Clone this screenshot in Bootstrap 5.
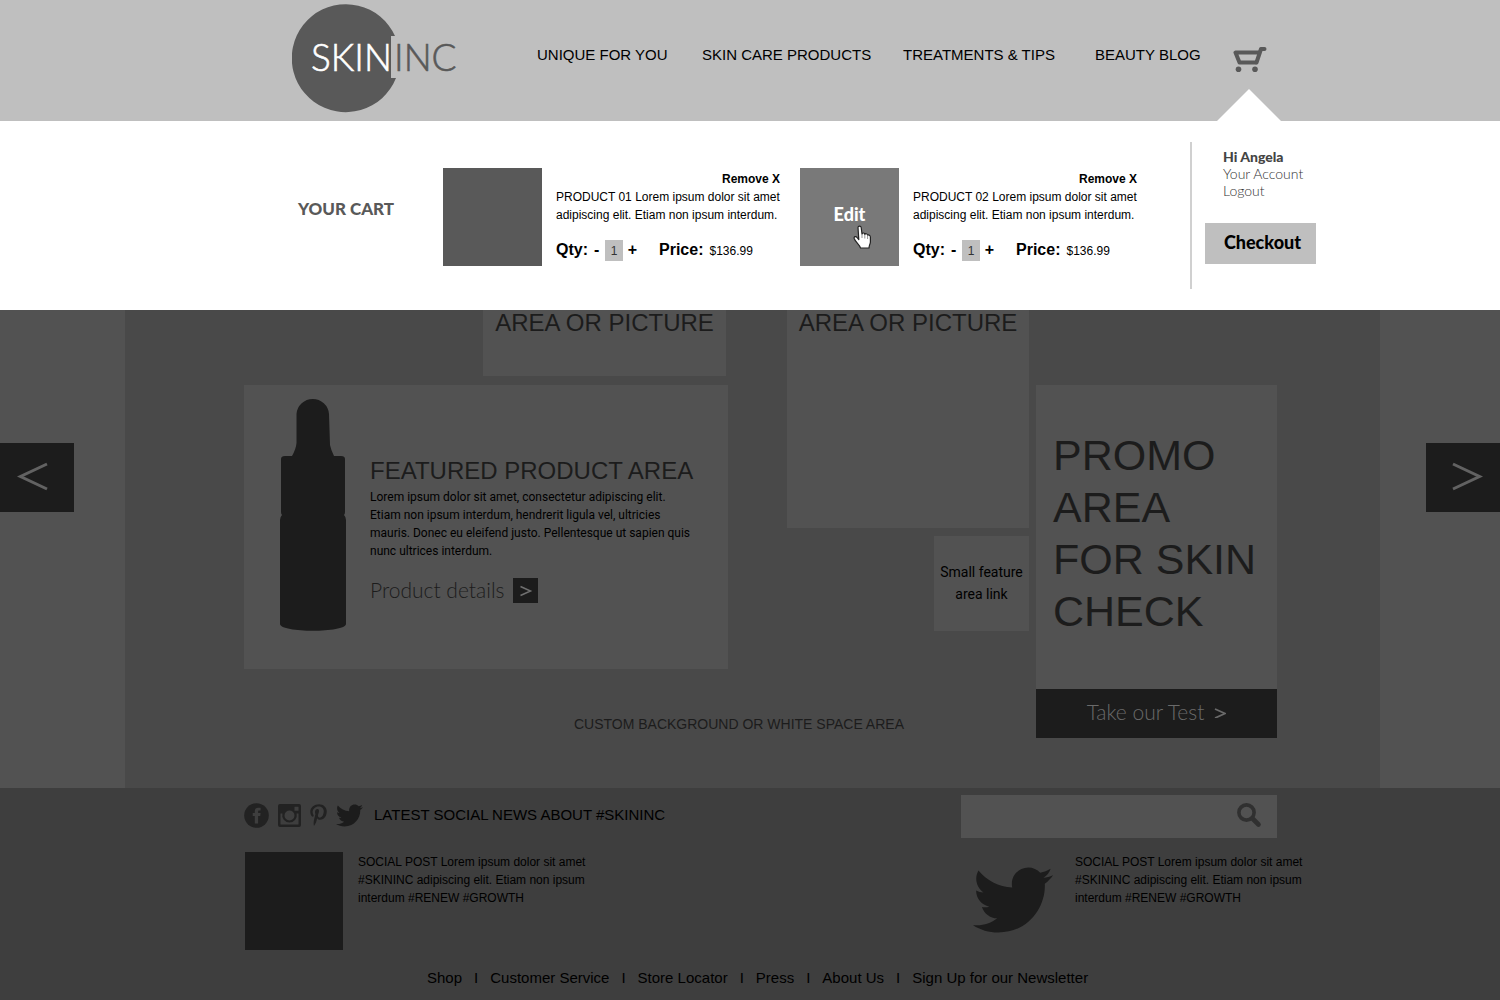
<!DOCTYPE html>
<html lang="en">
<head>
<meta charset="utf-8">
<meta name="viewport" content="width=device-width, initial-scale=1">
<title>Skin Inc – Your cart</title>
<link href="https://cdn.jsdelivr.net/npm/bootstrap@5.3.0/dist/css/bootstrap.min.css" rel="stylesheet">
<style>
  :root { --ink: #1c1c1c; --tile: #525252; --stage: #494949; --foot: #3e3e3e; --silver: #bfbfbf; --slate: #595959; }
  body { font-family: "Liberation Sans", Arial, sans-serif; font-size: 12px; line-height: 18px; color: #000; background: var(--foot); }
  a { color: inherit; text-decoration: none; }
  svg { display: block; }
  button { color: inherit; }
  .lato { font-family: Lato, sans-serif; }
  .din { font-family: Roboto, sans-serif; }

  .site-header { background: var(--silver); height: 121px; padding-left: 292px; }
  .brand { width: 245px; padding-top: 3px; }
  .main-nav { display: grid; grid-template-columns: 165px 201px 192px 138px 36px; font-size: 15px; line-height: 20px; padding-top: 45px; }
  .cart-link { height: 76px; }
  .cart-pointer { width: 64px; height: 32px; left: -16px; bottom: 0; background: #fff; clip-path: polygon(50% 0, 100% 100%, 0 100%); }

  .cart-panel { background: #fff; height: 189px; padding: 21px 0 21px 298px; }
  .cart-title { width: 145px; font-size: 17px; line-height: 20px; font-weight: 900; color: var(--slate); padding-top: 57px; }
  .cart-item { width: 357px; padding-top: 26px; gap: 14px; }
  .thumb { width: 99px; height: 98px; background: var(--slate); }
  .thumb-edit { background: #797979; color: #fff; font-size: 18px; line-height: 20px; font-weight: 900; padding-bottom: 8px; }
  .cursor { left: 53px; top: 57px; }
  .item-text { width: 224px; padding-top: 2px; }
  .qty-row { font-size: 16px; line-height: 20px; font-weight: bold; }
  .qty-label { width: 38px; }
  .qty-box { width: 18px; height: 21px; background: var(--silver); font-size: 12px; color: #333; }
  .qty-btn { font-weight: bold; width: 11px; height: 20px; line-height: 20px; }
  .price-label { margin-left: 21px; }
  .price-value { font-size: 12px; line-height: 22px; font-weight: normal; margin-left: 6px; }
  .account { border-left: 2px solid #d0d0d0; margin-left: 33px; width: 126px; padding: 6px 0 0 13px; font-size: 14px; line-height: 17px; color: #333; }
  .account-links { padding-left: 18px; font-weight: 300; }
  .account-name { font-weight: 900; color: #444; }
  .checkout { width: 111px; height: 41px; background: var(--silver); font-size: 18px; font-weight: 900; color: #000; margin-top: 24px; padding: 0 0 2px 4px; }

  .hero { background: var(--tile); }
  .strip-left { width: 125px; padding-top: 133px; }
  .strip-right { width: 120px; padding-top: 133px; }
  .slide-btn { width: 74px; height: 69px; background: var(--ink); }
  .stage { background: var(--stage); height: 478px; padding: 0 103px 0 119px; }
  .tile { background: var(--tile); }
  .tile-heading { font-size: 24px; line-height: 26px; color: var(--ink); }
  .tile-short { width: 243px; height: 66px; margin-right: 2px; }
  .tile-tall { height: 218px; }
  .featured { width: 484px; height: 284px; margin-top: 9px; padding: 12px 24px 0 36px; gap: 24px; }
  .featured-text { padding-top: 61px; }
  .featured-copy { padding-top: 4px; }
  .details-link { font-size: 21px; line-height: 24px; font-weight: 300; color: var(--ink); gap: 9px; margin-top: 18px; }
  .details-arrow { width: 25px; height: 25px; background: var(--ink); }
  .mid-col { width: 242px; margin-left: 59px; }
  .small-feature { width: 95px; height: 95px; margin-top: 8px; padding-bottom: 2px; font-size: 14px; line-height: 22px; }
  .caption-line { font-size: 14px; color: var(--ink); padding-right: 125px; margin-top: 46px; }
  .promo { width: 241px; margin-top: 75px; }
  .promo-text { height: 304px; padding: 44px 17px 0; font-size: 43px; line-height: 52px; color: var(--ink); }
  .promo-link { height: 49px; background: var(--ink); color: #6a6a6a; font-size: 21px; font-weight: 300; padding-bottom: 3px; gap: 10px; }

  .site-footer { background: var(--foot); padding: 7px 223px 0 244px; }
  .social-line { font-size: 15px; padding-bottom: 3px; }
  .social-icons { gap: 9px; margin-right: 11px; color: #222; }
  .search-box { width: 316px; height: 43px; background: var(--tile); padding: 0 15px 3px 0; }
  .search-box input { background: transparent; box-shadow: none !important; }
  .posts { margin: 14px -30px 0 1px; }
  .post-square { width: 98px; height: 98px; background: var(--ink); }
  .post-text { width: 232px; padding-top: 1px; }
  .post-left { gap: 15px; }
  .post-right { gap: 21px; }
  .footer-nav { font-size: 15px; line-height: 20px; gap: 12px; margin-top: 18px; padding: 0 0 12px 183px; }
</style>
</head>
<body>

<header class="site-header d-flex">
  <a class="brand" href="#" aria-label="Skin Inc">
    <svg width="170" height="112" viewBox="0 0 170 112">
      <path fill="#595959" d="M103 33A54 54 0 1 0 104 75H99V33Z"/>
      <g font-family="Lato, sans-serif" font-size="37" font-weight="300">
        <text x="19" y="68" fill="#fff" stroke="#fff" stroke-width=".6">SKIN</text>
        <text x="102" y="68" fill="#595959" stroke="#595959" stroke-width=".6">INC</text>
      </g>
    </svg>
  </a>
  <nav class="main-nav">
    <a href="#">UNIQUE FOR YOU</a>
    <a href="#">SKIN CARE PRODUCTS</a>
    <a href="#">TREATMENTS &amp; TIPS</a>
    <a href="#">BEAUTY BLOG</a>
    <a href="#" class="cart-link position-relative" aria-label="Cart">
      <svg width="36" height="28" viewBox="0 0 36 28" fill="none" stroke="#595959">
        <path stroke-width="4" stroke-linejoin="round" d="M23.500 17.500H6.500L2.500 7.500H26.500"/>
        <path stroke-width="4" stroke-linecap="round" stroke-linejoin="round" d="M23.500 17.500L28 4H31.500"/>
        <circle cx="5.500" cy="24.300" r="2.800" fill="#595959" stroke="none"/>
        <circle cx="22" cy="24.300" r="2.800" fill="#595959" stroke="none"/>
      </svg>
      <span class="cart-pointer position-absolute"></span>
    </a>
  </nav>
</header>

<section class="cart-panel d-flex" aria-label="Your cart">
  <h2 class="cart-title lato mb-0">YOUR CART</h2>

  <article class="cart-item d-flex">
    <div class="thumb flex-shrink-0"></div>
    <div class="item-text">
      <div class="text-end"><button class="border-0 bg-transparent p-0 fw-bold">Remove X</button></div>
      <p class="mb-3">PRODUCT 01 Lorem ipsum dolor sit amet adipiscing elit. Etiam non ipsum interdum.</p>
      <div class="qty-row d-flex">
        <label class="qty-label" for="qty1">Qty:</label>
        <button class="qty-btn border-0 bg-transparent p-0 text-start" aria-label="Less">-</button>
        <input id="qty1" class="qty-box border-0 p-0 text-center" value="1">
        <button class="qty-btn border-0 bg-transparent p-0 ms-1" aria-label="More">+</button>
        <span class="price-label">Price:</span>
        <span class="price-value">$136.99</span>
      </div>
    </div>
  </article>

  <article class="cart-item d-flex">
    <button class="thumb thumb-edit lato flex-shrink-0 border-0 position-relative d-flex align-items-center justify-content-center">Edit
      <svg class="cursor position-absolute" width="20" height="25" viewBox="0 0 20 25">
        <path fill="#fff" stroke="#222" stroke-width="1.200" stroke-linejoin="round" d="M5 2.500C5 .7 8 .7 8.200 2.500L9 9C9.500 7.500 11.600 7.800 11.800 9.300C12.500 8.300 14.300 8.600 14.600 10.200C15.700 9.500 17.300 10.200 17.400 12V17C17.400 19 16 20 16 23H7.500C7 20 2.500 17.500 1.200 13.500C.6 11.500 3 10.800 4.200 12.600L5.800 14.600Z"/>
        <path fill="none" stroke="#777" stroke-width=".8" d="M9 9V13M11.800 9.500V13.500M14.600 10.500V14"/>
      </svg>
    </button>
    <div class="item-text">
      <div class="text-end"><button class="border-0 bg-transparent p-0 fw-bold">Remove X</button></div>
      <p class="mb-3">PRODUCT 02 Lorem ipsum dolor sit amet adipiscing elit. Etiam non ipsum interdum.</p>
      <div class="qty-row d-flex">
        <label class="qty-label" for="qty2">Qty:</label>
        <button class="qty-btn border-0 bg-transparent p-0 text-start" aria-label="Less">-</button>
        <input id="qty2" class="qty-box border-0 p-0 text-center" value="1">
        <button class="qty-btn border-0 bg-transparent p-0 ms-1" aria-label="More">+</button>
        <span class="price-label">Price:</span>
        <span class="price-value">$136.99</span>
      </div>
    </div>
  </article>

  <aside class="account lato">
    <div class="account-links d-flex flex-column">
      <strong class="account-name">Hi Angela</strong>
      <a href="#">Your Account</a>
      <a href="#">Logout</a>
    </div>
    <button class="checkout border-0">Checkout</button>
  </aside>
</section>

<main class="hero d-flex">
  <div class="strip-left">
    <button class="slide-btn border-0 p-0" aria-label="Previous">
      <svg width="66" height="69" viewBox="0 0 66 69" fill="none" stroke="#626262" stroke-width="3"><path d="M47 21L20.500 33.500L47 46"/></svg>
    </button>
  </div>

  <div class="stage flex-grow-1 d-flex justify-content-between">
    <div>
      <div class="d-flex">
        <div class="d-flex flex-column">
          <div class="tile tile-short tile-heading text-center align-self-end">AREA OR PICTURE</div>
          <section class="tile featured d-flex">
            <svg class="flex-shrink-0" width="66" height="236" viewBox="0 0 66 236">
              <path fill="#1c1c1c" d="M16.500 17A16.300 16.300 0 0 1 49 17L50 48Q51 53 54 59H61Q65 59 65 62V115Q65 117 64 118Q66 120 66 123V227C66 236 0 236 0 227V123Q0 120 2 118Q1 117 1 115V62Q1 59 5 59H12Q16 52 16.500 46Z"/>
            </svg>
            <div class="featured-text">
              <h2 class="tile-heading fw-normal mb-0">FEATURED PRODUCT AREA</h2>
              <p class="featured-copy din mb-0">Lorem ipsum dolor sit amet, consectetur adipiscing elit.<br>Etiam non ipsum interdum, hendrerit ligula vel, ultricies<br>mauris. Donec eu eleifend justo. Pellentesque ut sapien quis<br>nunc ultrices interdum.</p>
              <a href="#" class="details-link lato d-flex">Product details
                <span class="details-arrow"><svg width="25" height="25" viewBox="0 0 25 25" fill="none" stroke="#707070" stroke-width="1.500"><path d="M7.500 8.500L17.500 13L7.500 17.500"/></svg></span>
              </a>
            </div>
          </section>
        </div>
        <div class="mid-col d-flex flex-column">
          <div class="tile tile-tall tile-heading text-center">AREA OR PICTURE</div>
          <a href="#" class="tile small-feature din text-center align-self-end d-flex align-items-center">Small feature area link</a>
        </div>
      </div>
      <div class="caption-line text-end">CUSTOM BACKGROUND OR WHITE SPACE AREA</div>
    </div>

    <section class="promo">
      <h2 class="tile promo-text fw-normal mb-0">PROMO<br>AREA<br>FOR SKIN<br>CHECK</h2>
      <a href="#" class="promo-link lato d-flex align-items-center justify-content-center">Take our Test
        <svg width="12" height="12" viewBox="0 0 12 12" fill="none" stroke="#6a6a6a" stroke-width="1.800"><path d="M1 3L11 7.500L1 12"/></svg>
      </a>
    </section>
  </div>

  <div class="strip-right d-flex justify-content-end align-items-start">
    <button class="slide-btn border-0 p-0" aria-label="Next">
      <svg width="74" height="69" viewBox="0 0 74 69" fill="none" stroke="#626262" stroke-width="3"><path d="M27 21L53.500 33.500L27 46"/></svg>
    </button>
  </div>
</main>

<footer class="site-footer">
  <div class="d-flex justify-content-between">
    <div class="social-line d-flex align-items-center">
      <div class="social-icons d-flex align-items-center">
        <a href="#" aria-label="Facebook"><svg width="25" height="25" viewBox="0 0 25 25"><circle cx="12.500" cy="12.500" r="12.300" fill="#222"/><path fill="#3e3e3e" d="M10.800 20.500V13H8.700V10.100H10.800V8.300C10.800 5.800 12.100 4.700 14.300 4.700L16.600 4.800V7.500H15.200C14.300 7.500 14.100 8 14.100 8.700V10.100H16.600L16.200 13H14.100V20.500Z"/></svg></a>
        <a href="#" aria-label="Instagram"><svg width="23" height="23" viewBox="0 0 23 23"><path fill="#222" fill-rule="evenodd" d="M2 0H21Q23 0 23 2V21Q23 23 21 23H2Q0 23 0 21V2Q0 0 2 0ZM16.500 2.700V6.700H20.500V2.700ZM2.500 9.500V20.500H20.500V9.500H18.600A7.300 7.300 0 1 1 4.400 9.500ZM11.500 6.500A5 5 0 1 0 11.500 16.500A5 5 0 1 0 11.500 6.500Z"/></svg></a>
        <a href="#" aria-label="Pinterest"><svg width="17" height="22" viewBox="0 0 384 512"><path fill="#222" d="M204 6.500C101.400 6.500 0 74.900 0 185.600 0 256 39.600 296 63.600 296c9.900 0 15.600-27.600 15.600-35.400 0-9.300-23.700-29.100-23.700-67.800 0-80.400 61.200-137.400 140.400-137.400 68.100 0 118.500 38.700 118.500 109.800 0 53.100-21.300 152.700-90.300 152.700-24.900 0-46.200-18-46.200-43.800 0-37.800 26.400-74.400 26.400-113.400 0-66.200-93.900-54.200-93.900 25.800 0 16.800 2.100 35.400 9.600 50.700-13.800 59.400-42 147.900-42 209.100 0 18.900 2.700 37.500 4.500 56.400 3.400 3.800 1.700 3.400 6.900 1.500 50.400-69 48.600-82.500 71.400-172.800 12.300 23.400 44.100 36 69.300 36 106.200 0 153.900-103.500 153.900-196.800C384 71.300 298.200 6.500 204 6.500z"/></svg></a>
        <a href="#" aria-label="Twitter"><svg width="27" height="23" viewBox="0 2.200 24 19.600"><path id="bird" fill="#1c1c1c" d="M23.954 4.569c-.885.389-1.830.654-2.825.775 1.014-.611 1.794-1.574 2.163-2.723-.951.555-2.005.959-3.127 1.184-.896-.959-2.173-1.559-3.591-1.559-2.717 0-4.920 2.203-4.920 4.917 0 .39.045.765.127 1.124C7.691 8.094 4.066 6.130 1.640 3.161c-.427.722-.666 1.561-.666 2.475 0 1.710.870 3.213 2.188 4.096-.807-.026-1.566-.248-2.228-.616v.061c0 2.385 1.693 4.374 3.946 4.827-.413.111-.849.171-1.296.171-.314 0-.615-.03-.916-.086.631 1.953 2.445 3.377 4.604 3.417-1.680 1.319-3.809 2.105-6.102 2.105-.39 0-.779-.023-1.170-.067 2.189 1.394 4.768 2.209 7.557 2.209 9.054 0 13.999-7.496 13.999-13.986 0-.209 0-.42-.015-.63.961-.689 1.800-1.560 2.460-2.548l-.047-.02z"/></svg></a>
      </div>
      LATEST SOCIAL NEWS ABOUT #SKININC
    </div>
    <form class="search-box d-flex align-items-center" role="search">
      <input class="form-control border-0 rounded-0" type="search" aria-label="Search">
      <button type="button" class="border-0 bg-transparent p-0" aria-label="Submit search">
        <svg width="26" height="26" viewBox="0 0 26 26" fill="none" stroke="#303030"><circle cx="10.500" cy="10.500" r="7.600" stroke-width="3.600"/><path d="M16.500 16.500L22.500 22.500" stroke-width="4.600" stroke-linecap="round"/></svg>
      </button>
    </form>
  </div>

  <div class="posts d-flex justify-content-between">
    <article class="post-left d-flex">
      <div class="post-square"></div>
      <p class="post-text mb-0">SOCIAL POST Lorem ipsum dolor sit amet #SKININC adipiscing elit. Etiam non ipsum interdum #RENEW #GROWTH</p>
    </article>
    <article class="post-right d-flex">
      <svg class="mt-2" width="82" height="80" viewBox="0 0 24 24"><use href="#bird"/></svg>
      <p class="post-text mb-0">SOCIAL POST Lorem ipsum dolor sit amet #SKININC adipiscing elit. Etiam non ipsum interdum #RENEW #GROWTH</p>
    </article>
  </div>

  <nav class="footer-nav d-flex">
    <a href="#">Shop</a><span>I</span>
    <a href="#">Customer Service</a><span>I</span>
    <a href="#">Store Locator</a><span>I</span>
    <a href="#">Press</a><span>I</span>
    <a href="#">About Us</a><span>I</span>
    <a href="#">Sign Up for our Newsletter</a>
  </nav>
</footer>

<script src="https://cdn.jsdelivr.net/npm/bootstrap@5.3.0/dist/js/bootstrap.bundle.min.js"></script>
</body>
</html>
